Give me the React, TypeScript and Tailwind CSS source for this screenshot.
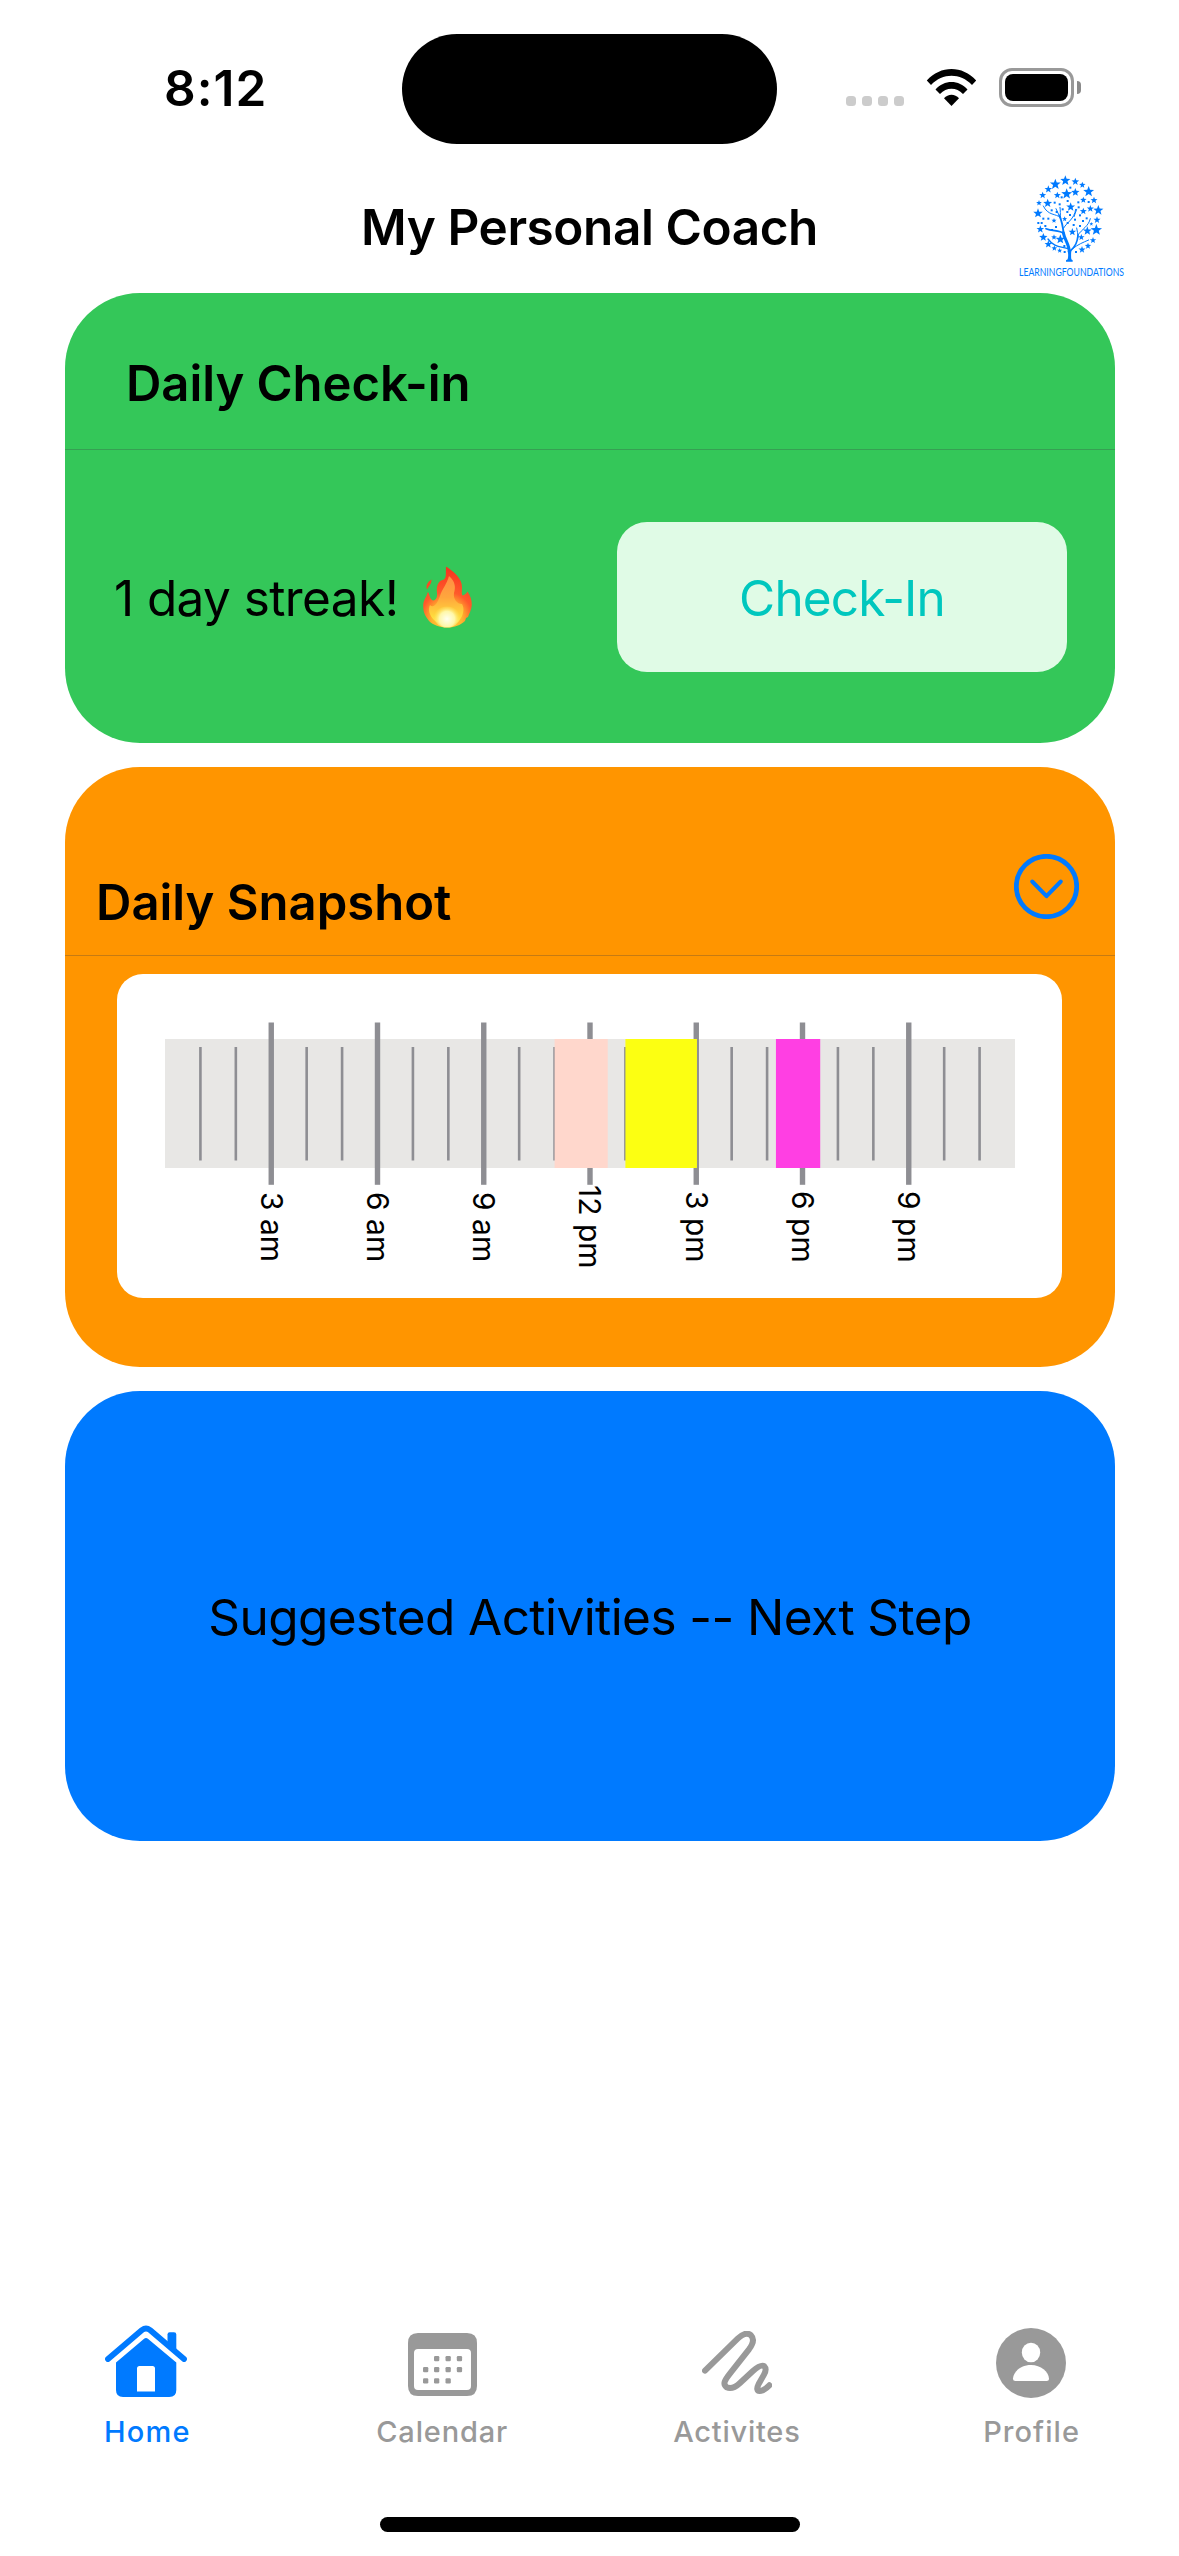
import React from "react";

/* ---------- Brand logo: tree made of stars ---------- */

const LOGO_STARS: [number, number, number][] = [
  [256, 92, 16], [226, 103, 17], [286, 95, 12], [307, 105, 10], [205, 118, 12],
  [188, 136, 11], [232, 136, 11], [260, 132, 17], [286, 127, 13], [326, 125, 17],
  [310, 150, 10], [342, 151, 11], [177, 159, 9], [203, 160, 14], [272, 171, 14],
  [331, 176, 11], [355, 181, 16], [174, 190, 15], [310, 184, 11], [351, 210, 11],
  [222, 212, 8], [181, 238, 12], [277, 246, 12], [322, 243, 14], [349, 240, 18],
  [190, 262, 13], [241, 268, 15], [304, 262, 10], [339, 271, 10], [205, 283, 12],
  [223, 295, 9], [239, 302, 8], [324, 288, 10], [306, 299, 11], [222, 262, 9],
  [334, 222, 6], [254, 207, 8],
];

const LOGO_DOTS: [number, number][] = [
  [271, 113], [245, 142], [326, 156], [239, 163], [263, 153], [224, 158],
  [295, 157], [215, 181], [248, 178], [270, 195], [285, 209], [205, 206],
  [185, 219], [263, 219], [175, 219], [300, 228], [320, 205], [253, 288],
  [281, 225], [228, 231], [190, 206], [309, 213], [254, 306], [288, 306],
  [196, 228], [296, 172], [230, 186], [262, 186], [300, 196], [216, 240],
];

function starPoints(cx: number, cy: number, r: number) {
  return Array.from({ length: 10 }, (_, i) => {
    const radius = i % 2 === 0 ? r : r * 0.42;
    const angle = (Math.PI / 5) * i - Math.PI / 2;
    return `${(cx + radius * Math.cos(angle)).toFixed(1)},${(cy + radius * Math.sin(angle)).toFixed(1)}`;
  }).join(" ");
}

function TreeLogo() {
  return (
    <svg viewBox="0 0 540 420" className="h-[140px] w-[180px] text-[#007aff]" fill="currentColor">
      {LOGO_STARS.map(([x, y, r]) => (
        <polygon key={`${x}-${y}`} points={starPoints(x, y, r)} />
      ))}
      {LOGO_DOTS.map(([x, y]) => (
        <rect key={`${x}-${y}`} x={x - 3} y={y - 3} width="6" height="6" />
      ))}
      <path d="M258 335v-4l5-3c2-9 2-18 0-26l11 0c-1 9-1 18 0 26l4 3v4z" />
      <g fill="none" stroke="currentColor" strokeLinecap="round">
        <path strokeWidth="9" d="M268 306c0-22-14-36-18-58" />
        <path strokeWidth="5.5" d="M251 252c-2-22-6-40-13-56" />
        <path strokeWidth="3" d="M242 206c-2-14 0-24-2-34M240 202c-12-12-36-4-50-34M238 198l-10-22" />
        <path strokeWidth="5" d="M252 250c-16-10-34-6-54-14" />
        <path strokeWidth="3" d="M251 234c10-18 32-26 36-56M282 200l8-22" />
        <path strokeWidth="5" d="M272 302c14-14 20-24 22-46" />
        <path strokeWidth="3" d="M294 262c0-10-2-18-4-28M293 256c14-20 32-26 38-50M278 296c18-14 30-18 48-26" />
        <path strokeWidth="4" d="M266 297c-20-8-44-4-62-30" />
      </g>
      <text
        x="117"
        y="378"
        fontSize="34"
        fontWeight="400"
        textLength="315"
        lengthAdjust="spacingAndGlyphs"
        className="font-['Lato',sans-serif]"
      >
        LEARNINGFOUNDATIONS
      </text>
    </svg>
  );
}

/* ---------- Status bar ---------- */

function WifiIcon() {
  return (
    <svg viewBox="0 0 51 37" className="h-[37px] w-[51px]">
      <path d="M0.8 11.6C14.5-3.8 36.500-3.8 50.200 11.600L46 16C34.300 3.800 16.700 3.800 5 16Z" strokeLinejoin="round" />
      <path d="M9.500 20.500C18 10.500 33 10.500 41.500 20.500L37 25C30.500 18 20.500 18 14 25Z" />
      <path d="M18 29.300C22 24.500 29 24.500 33 29.300L25.500 37Z" />
    </svg>
  );
}

function StatusBar() {
  return (
    <div className="mt-[34px] flex h-[110px] shrink-0 items-center">
      <span className="-mt-[3px] ml-[164px] w-[238px] text-[49.5px] leading-[60px] font-semibold tracking-[1px]">
        8:12
      </span>
      <div className="h-[110px] w-[375px] rounded-[55px] bg-black" />
      <div className="-mt-[3px] ml-[69px] flex h-[39px] items-end">
        <div className="mb-px flex gap-[6px]">
          {[0, 1, 2, 3].map((dot) => (
            <span key={dot} className="size-[10px] rounded-[3.5px] bg-[#cccccc]" />
          ))}
        </div>
        <div className="mb-px ml-[22px]">
          <WifiIcon />
        </div>
        <div className="ml-[22px] flex items-center">
          <div className="h-[39px] w-[75px] rounded-[13px] border-[3px] border-[#999999] p-[3px]">
            <div className="h-full w-full rounded-[8px] bg-black" />
          </div>
          <div className="ml-[3px] h-[13px] w-[4px] rounded-r-full bg-[#8a8a8a]" />
        </div>
      </div>
    </div>
  );
}

/* ---------- Daily check-in ---------- */

function FlameIcon() {
  return (
    <svg viewBox="0 0 49 62" className="h-[62px] w-[49px]">
      <defs>
        <radialGradient id="flame-outer" cx="24" cy="52" r="50" gradientUnits="userSpaceOnUse">
          <stop offset="0" stopColor="#ffdf3a" />
          <stop offset="0.3" stopColor="#ffb52e" />
          <stop offset="0.52" stopColor="#ff5a2b" />
          <stop offset="1" stopColor="#f8331e" />
        </radialGradient>
        <linearGradient id="flame-mid" x1="0" y1="8" x2="0" y2="60" gradientUnits="userSpaceOnUse">
          <stop offset="0" stopColor="#ff8a45" />
          <stop offset="0.45" stopColor="#ffa63c" />
          <stop offset="0.8" stopColor="#ffd83c" />
          <stop offset="1" stopColor="#ffee5a" />
        </linearGradient>
        <radialGradient id="flame-core" cx="24" cy="53" r="14" gradientUnits="userSpaceOnUse">
          <stop offset="0" stopColor="#fffff0" />
          <stop offset="0.55" stopColor="#fff7a8" />
          <stop offset="1" stopColor="#ffe14a" stopOpacity="0" />
        </radialGradient>
      </defs>
      <path
        fill="url(#flame-outer)"
        d="M23 0.500C31 6 39 12 39 21.500C39 25 38.300 28 39.500 29.500C41.500 29 43.500 27.500 44.500 25.500C47 29 49 34 48.800 39C48.500 44 46 48 45 51L43 52L42 55C37 59.500 30 62 24 61.500C17 61.500 10 59 6 55L3.500 51.500C1 48 0 43.500 0.200 39C0.500 34 3.500 31 4.800 26C7 27.500 6 33 10 34.500C14 34 14.500 30 13.800 25C13.500 19 16 14.500 20 14C24 13 22.500 6 23 0.500Z"
      />
      <path fill="#fb4a22" d="M8.500 13.500C8.500 18 6.500 19 4 23.500C2.500 19.500 4.500 16 8.500 13.500Z" />
      <path
        fill="url(#flame-mid)"
        d="M26 10C32 15 33 21 31 27C30 33 34 38 39 38C42 43 40 50 36 55C32 59.500 16 59.500 11 54C6 49 5 43 7 39C11 43 15 36 17 30C19 23 24 18 26 10Z"
      />
      <ellipse cx="24" cy="51" rx="13" ry="10.500" fill="url(#flame-core)" />
    </svg>
  );
}

function CheckInCard() {
  return (
    <section className="flex h-[450px] flex-col rounded-[75px] bg-[#34c759]">
      <div className="flex h-[157px] items-center border-b border-[#369f53] pt-[26px] pl-[61px]">
        <h2 className="text-[49px] leading-[60px] font-semibold tracking-[-0.05px]">Daily Check-in</h2>
      </div>
      <div className="flex flex-1 items-center pr-[48px] pl-[49px]">
        <p className="mt-[3px] w-[309px] text-[49.5px] leading-[60px] tracking-[-0.58px]">1 day streak!</p>
        <FlameIcon />
        <button className="mt-px ml-auto h-[150px] w-[450px] rounded-[30px] bg-[#e0fbe6] pt-[2px] text-[49.5px] leading-[60px] tracking-[-0.88px] text-[#00c7be]">
          Check-In
        </button>
      </div>
    </section>
  );
}

/* ---------- Daily snapshot ---------- */

const HOUR_WIDTH = 35.417;
const HOURS = Array.from({ length: 23 }, (_, i) => i + 1);

const EVENTS = [
  { start: 11, end: 12.5, color: "#ffd7cc" },
  { start: 13, end: 15.02, color: "#fcff12" },
  { start: 17.25, end: 18.5, color: "#ff3fe3" },
];

const LABELS = ["3 am", "6 am", "9 am", "12 pm", "3 pm", "6 pm", "9 pm"];

function TimelineChart() {
  return (
    <svg viewBox="0 0 850 163" className="h-[163px] w-[850px]">
      <rect x="0" y="17" width="850" height="129" fill="#e8e7e5" />
      {HOURS.map((hour) => {
        const major = hour % 3 === 0;
        const width = major ? 5.4 : 2.6;
        return (
          <rect
            key={hour}
            x={hour * HOUR_WIDTH - width / 2}
            y={major ? 0.5 : 25}
            width={width}
            height={major ? 162.3 : 113.5}
            fill="#8e8e93"
          />
        );
      })}
      {EVENTS.map((event) => (
        <rect
          key={event.start}
          x={event.start * HOUR_WIDTH}
          y="17"
          width={(event.end - event.start) * HOUR_WIDTH}
          height="129"
          fill={event.color}
        />
      ))}
    </svg>
  );
}

function Timeline() {
  return (
    <div className="mt-[18px] ml-[52px] h-[324px] w-[945px] rounded-[26px] bg-white pt-[48px] pl-[48px]">
      <TimelineChart />
      <div className="-mt-[17px] ml-[53px] flex h-[118px] w-[744px]">
        {LABELS.map((label) => (
          <div key={label} className="flex flex-1 justify-center">
            <span className="flex h-[118px] items-center justify-center pl-px text-[30px] leading-[36px] [text-orientation:sideways] [writing-mode:vertical-rl]">
              {label}
            </span>
          </div>
        ))}
      </div>
    </div>
  );
}

function SnapshotCard() {
  return (
    <section className="h-[600px] rounded-[75px] bg-[#ff9500]">
      <div className="flex h-[189px] items-end justify-between border-b border-[#c67b13] pr-[36px] pl-[31px]">
        <h2 className="mb-[22px] text-[49px] leading-[60px] font-semibold">Daily Snapshot</h2>
        <svg
          viewBox="0 0 65 65"
          className="mb-[36px] size-[65px] text-[#007aff]"
          fill="none"
          stroke="currentColor"
          strokeLinecap="round"
          strokeLinejoin="round"
        >
          <circle cx="32.500" cy="32.500" r="30.200" strokeWidth="4.800" />
          <path d="M18.200 27.500L32.500 42.200L46.800 27.500" strokeWidth="4" />
        </svg>
      </div>
      <Timeline />
    </section>
  );
}

/* ---------- Tab bar ---------- */

function HomeIcon() {
  return (
    <svg viewBox="0 0 82 72" className="mr-[2px] mb-[7px] h-[72px] w-[82px]" fill="currentColor">
      <path
        d="M3 34L37 5Q41 2 45 5L79 34"
        fill="none"
        stroke="currentColor"
        strokeWidth="5.800"
        strokeLinecap="round"
        strokeLinejoin="round"
      />
      <path d="M62.500 18V9.500Q62.500 7.300 64.700 7.300H69Q71.300 7.300 71.300 9.500V27Z" />
      <path
        fillRule="evenodd"
        d="M11 37.500L38.800 14Q41 12 43.200 14L71.300 37.500V65Q71.300 72 64.300 72H18Q11 72 11 65ZM32 66.500H50V43.500Q50 41 47.500 41H34.500Q32 41 32 43.500Z"
      />
    </svg>
  );
}

const CALENDAR_DAYS: [number, number][] = [
  [26, 23], [37.500, 23], [48.800, 23],
  [15, 34], [26, 34], [37.500, 34], [48.800, 34],
  [15, 45.200], [26, 45.200], [37.500, 45.200],
];

function CalendarIcon() {
  return (
    <svg viewBox="0 0 69 63" className="h-[63px] w-[69px]" fill="currentColor">
      <path
        fillRule="evenodd"
        d="M10 0H59Q69 0 69 10V53Q69 63 59 63H10Q0 63 0 53V10Q0 0 10 0ZM10 16Q6 16 6 20V53Q6 57 10 57H59Q63 57 63 53V20Q63 16 59 16Z"
      />
      {CALENDAR_DAYS.map(([x, y]) => (
        <rect key={`${x}-${y}`} x={x} y={y} width="5.300" height="5.300" rx="1.200" />
      ))}
    </svg>
  );
}

function ScribbleIcon() {
  return (
    <svg
      viewBox="186 93 210 190"
      className="mb-[2px] h-[63.300px] w-[70px]"
      fill="none"
      stroke="currentColor"
      strokeWidth="18"
      strokeLinecap="round"
      strokeLinejoin="round"
    >
      <path d="M195 212L293 116C310 100 324 98 333 106C342 115 341 129 327 148L272 218C252 243 248 253 260 262C272 268 286 262 300 249L338 214C355 199 366 194 373 199C378 204 378 213 372 224L356 252C349 266 351 273 359 273C368 273 378 266 388 256" />
    </svg>
  );
}

function ProfileIcon() {
  return (
    <svg viewBox="0 0 70 70" className="mr-px mb-[2px] size-[70px]">
      <circle cx="35" cy="35" r="35" fill="currentColor" />
      <ellipse cx="35" cy="24.500" rx="9.200" ry="9.800" fill="white" />
      <path d="M19.500 53Q17 53 17 50.500C17.500 43.500 25 37 35 37S52.500 43.500 53 50.500Q53 53 50.500 53Z" fill="white" />
    </svg>
  );
}

const TABS = [
  { label: "Home", icon: <HomeIcon />, color: "text-[#007aff]", tracking: "tracking-[1.15px]" },
  { label: "Calendar", icon: <CalendarIcon />, color: "text-[#999999]", tracking: "tracking-[0.83px]" },
  { label: "Activites", icon: <ScribbleIcon />, color: "text-[#999999]", tracking: "tracking-[0.77px]" },
  { label: "Profile", icon: <ProfileIcon />, color: "text-[#999999]", tracking: "tracking-[1.04px]" },
];

function TabBar() {
  return (
    <nav className="mt-auto grid h-[199px] grid-cols-4">
      {TABS.map((tab) => (
        <button key={tab.label} className={`flex flex-col items-center ${tab.color}`}>
          <span className="mt-[6px] flex h-[80px] items-center justify-center">{tab.icon}</span>
          <span className={`mt-[10px] text-[29px] leading-[36px] font-medium ${tab.tracking}`}>{tab.label}</span>
        </button>
      ))}
    </nav>
  );
}

export default function App() {
  return (
    <div className="flex h-[2556px] w-[1179px] flex-col overflow-hidden bg-white font-['Inter',sans-serif] text-black">
      <StatusBar />
      <header className="grid h-[149px] shrink-0 grid-cols-[1fr_auto_1fr] items-start">
        <h1 className="col-start-2 mt-[53px] text-[49.5px] leading-[60px] font-semibold tracking-[-0.44px]">
          My Personal Coach
        </h1>
        <div className="mt-[6px] mr-[19px] justify-self-end">
          <TreeLogo />
        </div>
      </header>
      <main className="mr-[64px] ml-[65px] flex flex-col gap-[24px]">
        <CheckInCard />
        <SnapshotCard />
        <section className="flex h-[450px] items-center justify-center rounded-[75px] bg-[#007aff] pt-[2px]">
          <p className="text-[49.5px] leading-[60px] tracking-[-0.57px]">Suggested Activities -- Next Step</p>
        </section>
      </main>
      <TabBar />
      <div className="mb-[24px] h-[15px] w-[420px] shrink-0 self-center rounded-full bg-black" />
    </div>
  );
}
